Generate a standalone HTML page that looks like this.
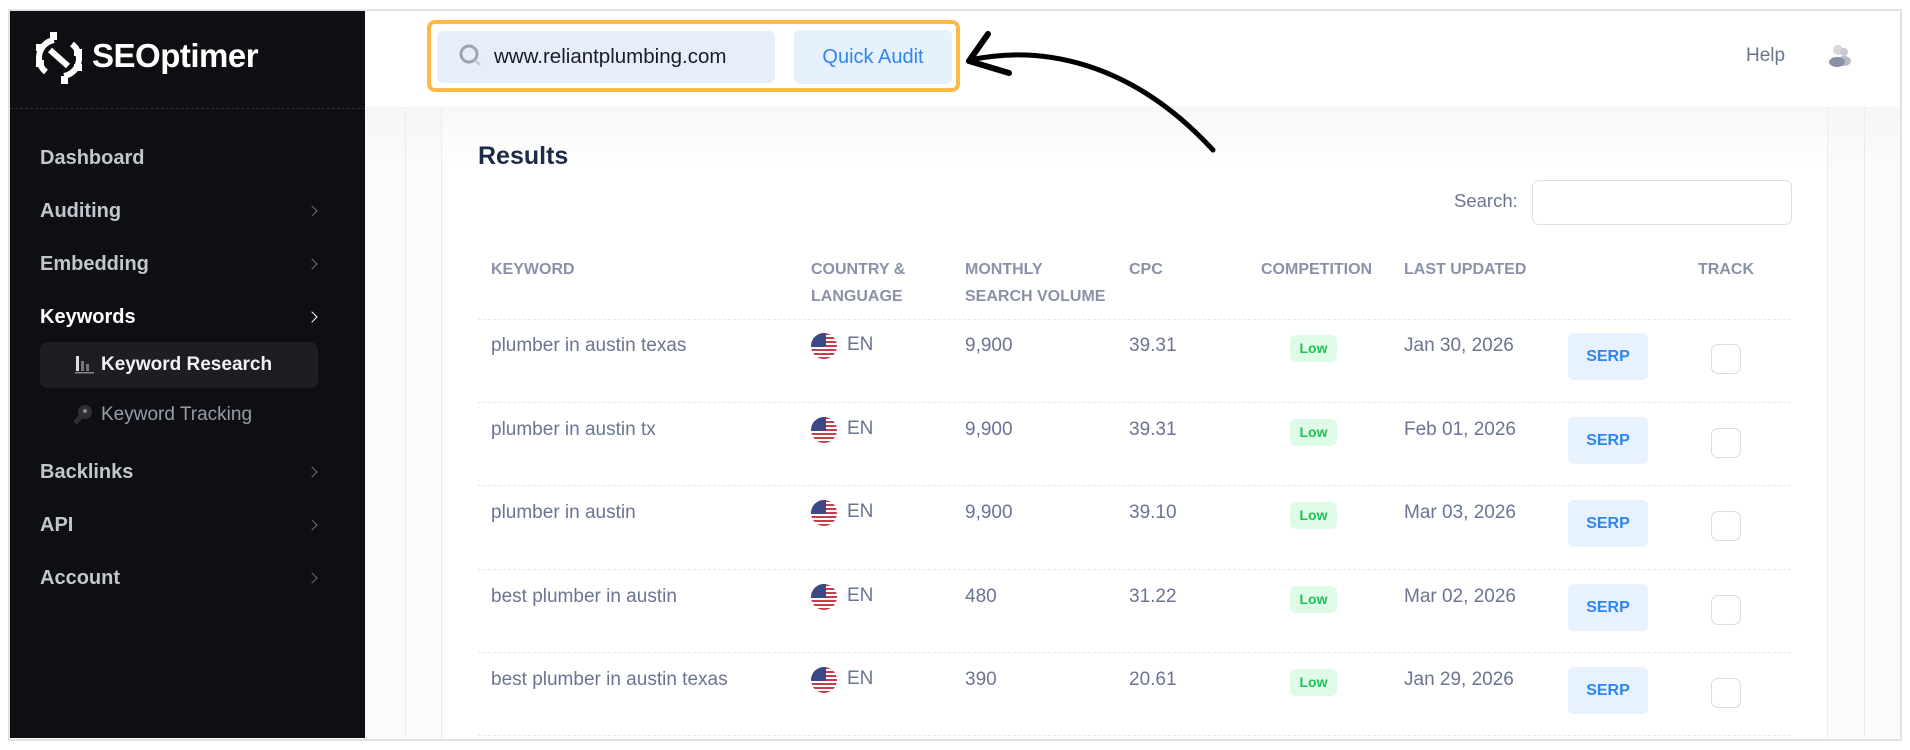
<!DOCTYPE html>
<html><head><meta charset="utf-8"><style>
*{margin:0;padding:0;box-sizing:border-box}
body{width:1910px;height:750px;background:#fff;position:relative;overflow:hidden;font-family:"Liberation Sans",Arial,sans-serif}
.abs{position:absolute}
#frame{left:8px;top:9px;width:1894px;height:732px;border:2px solid #e2e2e4;background:#fff}
#side{left:10px;top:11px;width:355px;height:727px;background:#0e0f13}
.nav{position:absolute;left:30px;font-size:20px;font-weight:bold;color:#c4c6cf;line-height:24px}
.chev{position:absolute;left:298px;width:8px;height:8px;border-right:1.5px solid #6e717c;border-top:1.5px solid #6e717c;transform:rotate(45deg)}
#main{left:365px;top:107px;width:1535px;height:631px;background:linear-gradient(#f6f6f7,#fbfbfb 60px,#fbfbfb)}
.th{position:absolute;top:256px;font-size:16px;font-weight:bold;color:#8b91a7;line-height:27px}
.td{position:absolute;font-size:19px;color:#6b7492;line-height:24px}
.sep{position:absolute;left:478px;width:1313px;border-top:1px dashed #e6e7ec}
.flag{position:absolute;width:26px;height:26px;border-radius:50%;overflow:hidden;background:repeating-linear-gradient(#c73e4a 0 2px,#fff 2px 4px)}
.flag:before{content:"";position:absolute;left:0;top:0;width:15px;height:14px;background:#3b4a87}
.low{position:absolute;left:1290px;width:47px;height:27px;background:#dffbe7;border-radius:6px;color:#1ec25a;font-size:14px;font-weight:bold;text-align:center;line-height:27px}
.serp{position:absolute;left:1568px;width:80px;height:47px;background:#e7f1ff;border-radius:6px;color:#2f86f0;font-size:16px;font-weight:bold;text-align:center;line-height:47px}
.cb{position:absolute;left:1711px;width:30px;height:30px;border:1.5px solid #d9dde8;border-radius:7px;background:#fff}
</style></head><body>
<div id="frame" class="abs"></div>
<div id="side" class="abs">
  <svg class="abs" style="left:24px;top:21px" width="50" height="52" viewBox="0 0 50 52">
    <path d="M20 8 A18 18 0 0 0 12 40" fill="none" stroke="#fff" stroke-width="6"/>
    <path d="M30 44 A18 18 0 0 0 38 12" fill="none" stroke="#fff" stroke-width="6"/>
    <path d="M16 18 L34 34" stroke="#fff" stroke-width="6"/>
    <rect x="16" y="0" width="7" height="8" fill="#fff"/><rect x="2" y="12" width="8" height="7" fill="#fff"/><rect x="2" y="28" width="8" height="7" fill="#fff"/>
    <rect x="27" y="44" width="7" height="8" fill="#fff"/><rect x="40" y="32" width="8" height="7" fill="#fff"/><rect x="40" y="17" width="8" height="7" fill="#fff"/>
  </svg>
  <div class="abs" style="left:82px;top:25px;font-size:33px;font-weight:bold;color:#fff;letter-spacing:-0.5px;line-height:40px">SEOptimer</div>
  <div class="abs" style="left:0;top:97px;width:355px;border-top:1px dashed #2c2e35"></div>
  <div class="nav" style="top:135px">Dashboard</div>
  <div class="nav" style="top:188px">Auditing</div><div class="chev" style="top:196px"></div>
  <div class="nav" style="top:241px">Embedding</div><div class="chev" style="top:249px"></div>
  <div class="nav" style="top:294px;color:#fff">Keywords</div><div class="chev" style="top:302px;border-color:#fff"></div>
  <div class="abs" style="left:30px;top:331px;width:278px;height:46px;background:#1d1e23;border-radius:8px"></div>
  <svg class="abs" style="left:64px;top:344px" width="22" height="20"><rect x="2" y="1" width="3" height="15" fill="#ddd"/><rect x="7" y="6" width="3" height="10" fill="#777"/><rect x="12" y="9" width="3" height="7" fill="#777"/><rect x="1" y="17" width="19" height="1.5" fill="#888"/></svg>
  <div class="abs" style="left:91px;top:342px;font-size:19px;font-weight:bold;color:#f2f2f4;line-height:24px">Keyword Research</div>
  <svg class="abs" style="left:62px;top:393px" width="22" height="22"><circle cx="13" cy="8" r="7" fill="#2e2f36"/><path d="M9 12 L3 19" stroke="#2e2f36" stroke-width="5"/><circle cx="13" cy="7" r="2" fill="#888"/></svg>
  <div class="abs" style="left:91px;top:392px;font-size:19px;color:#9a9cab;line-height:24px">Keyword Tracking</div>
  <div class="nav" style="top:449px">Backlinks</div><div class="chev" style="top:457px"></div>
  <div class="nav" style="top:502px">API</div><div class="chev" style="top:510px"></div>
  <div class="nav" style="top:555px">Account</div><div class="chev" style="top:563px"></div>
</div>
<div id="main" class="abs"></div>
<div class="abs" style="left:405px;top:107px;width:1460px;height:631px;border-left:1px solid #ececef;border-right:1px solid #ececef"></div>
<div class="abs" style="left:441px;top:107px;width:1387px;height:631px;border-left:1px solid #ececef;border-right:1px solid #ececef;background:linear-gradient(#f7f7f8,#fff 60px)"></div>
<div class="abs" style="left:427px;top:20px;width:533px;height:72px;border:4px solid #fdb945;border-radius:8px"></div>
<div class="abs" style="left:437px;top:31px;width:338px;height:52px;background:#e7eefb;border-radius:6px"></div>
<svg class="abs" style="left:459px;top:44px" width="26" height="26"><circle cx="10" cy="10" r="8" fill="none" stroke="#9ea3b3" stroke-width="3"/><path d="M16 16 L21 21" stroke="#c9ccd6" stroke-width="3"/></svg>
<div class="abs" style="left:494px;top:44px;font-size:20.5px;color:#1a1c22;line-height:26px">www.reliantplumbing.com</div>
<div class="abs" style="left:794px;top:30px;width:158px;height:54px;background:#e7f0fd;border-radius:6px;color:#2f86f0;font-size:20px;text-align:center;line-height:54px">Quick Audit</div>
<svg class="abs" style="left:960px;top:25px" width="270" height="135"><path d="M10 35 C80 20 170 35 253 125" fill="none" stroke="#000" stroke-width="5" stroke-linecap="round"/><path d="M28 9 L9 36 L49 48" fill="none" stroke="#000" stroke-width="6" stroke-linecap="round" stroke-linejoin="round"/></svg>
<div class="abs" style="left:1746px;top:44px;font-size:19px;color:#6b7492;line-height:24px">Help</div>
<svg class="abs" style="left:1828px;top:44px" width="24" height="24"><circle cx="10" cy="6" r="5" fill="#d6d8de"/><circle cx="16" cy="8" r="4" fill="#c6c9d2"/><ellipse cx="16" cy="17" rx="7" ry="5" fill="#b8bcc8"/><ellipse cx="9" cy="18" rx="8" ry="5" fill="#8a90a6"/></svg>
<div class="abs" style="left:478px;top:141px;font-size:25px;font-weight:bold;color:#1f2a47;line-height:30px">Results</div>
<div class="abs" style="left:1454px;top:189px;font-size:18.5px;color:#6b7492;line-height:24px">Search:</div>
<div class="abs" style="left:1532px;top:180px;width:260px;height:45px;border:1.5px solid #dde0ea;border-radius:7px"></div>
<div class="th" style="left:491px">KEYWORD</div>
<div class="th" style="left:811px">COUNTRY &amp;<br>LANGUAGE</div>
<div class="th" style="left:965px">MONTHLY<br>SEARCH VOLUME</div>
<div class="th" style="left:1129px">CPC</div>
<div class="th" style="left:1261px">COMPETITION</div>
<div class="th" style="left:1404px">LAST UPDATED</div>
<div class="th" style="left:1698px">TRACK</div>
<div class="sep" style="top:319px"></div>
<div class="sep" style="top:402px"></div>
<div class="sep" style="top:485px"></div>
<div class="sep" style="top:569px"></div>
<div class="sep" style="top:652px"></div>
<div class="sep" style="top:735px"></div>

<div class="td" style="left:491px;top:334px">plumber in austin texas</div><div class="flag" style="left:811px;top:333px"></div><div class="td" style="left:847px;top:333px">EN</div><div class="td" style="left:965px;top:334px">9,900</div><div class="td" style="left:1129px;top:334px">39.31</div><div class="low" style="top:335px">Low</div><div class="td" style="left:1404px;top:334px">Jan 30, 2026</div><div class="serp" style="top:333px">SERP</div><div class="cb" style="top:344px"></div>

<div class="td" style="left:491px;top:418px">plumber in austin tx</div><div class="flag" style="left:811px;top:417px"></div><div class="td" style="left:847px;top:417px">EN</div><div class="td" style="left:965px;top:418px">9,900</div><div class="td" style="left:1129px;top:418px">39.31</div><div class="low" style="top:419px">Low</div><div class="td" style="left:1404px;top:418px">Feb 01, 2026</div><div class="serp" style="top:417px">SERP</div><div class="cb" style="top:428px"></div>

<div class="td" style="left:491px;top:501px">plumber in austin</div><div class="flag" style="left:811px;top:500px"></div><div class="td" style="left:847px;top:500px">EN</div><div class="td" style="left:965px;top:501px">9,900</div><div class="td" style="left:1129px;top:501px">39.10</div><div class="low" style="top:502px">Low</div><div class="td" style="left:1404px;top:501px">Mar 03, 2026</div><div class="serp" style="top:500px">SERP</div><div class="cb" style="top:511px"></div>

<div class="td" style="left:491px;top:585px">best plumber in austin</div><div class="flag" style="left:811px;top:584px"></div><div class="td" style="left:847px;top:584px">EN</div><div class="td" style="left:965px;top:585px">480</div><div class="td" style="left:1129px;top:585px">31.22</div><div class="low" style="top:586px">Low</div><div class="td" style="left:1404px;top:585px">Mar 02, 2026</div><div class="serp" style="top:584px">SERP</div><div class="cb" style="top:595px"></div>

<div class="td" style="left:491px;top:668px">best plumber in austin texas</div><div class="flag" style="left:811px;top:667px"></div><div class="td" style="left:847px;top:667px">EN</div><div class="td" style="left:965px;top:668px">390</div><div class="td" style="left:1129px;top:668px">20.61</div><div class="low" style="top:669px">Low</div><div class="td" style="left:1404px;top:668px">Jan 29, 2026</div><div class="serp" style="top:667px">SERP</div><div class="cb" style="top:678px"></div>
</body></html>
